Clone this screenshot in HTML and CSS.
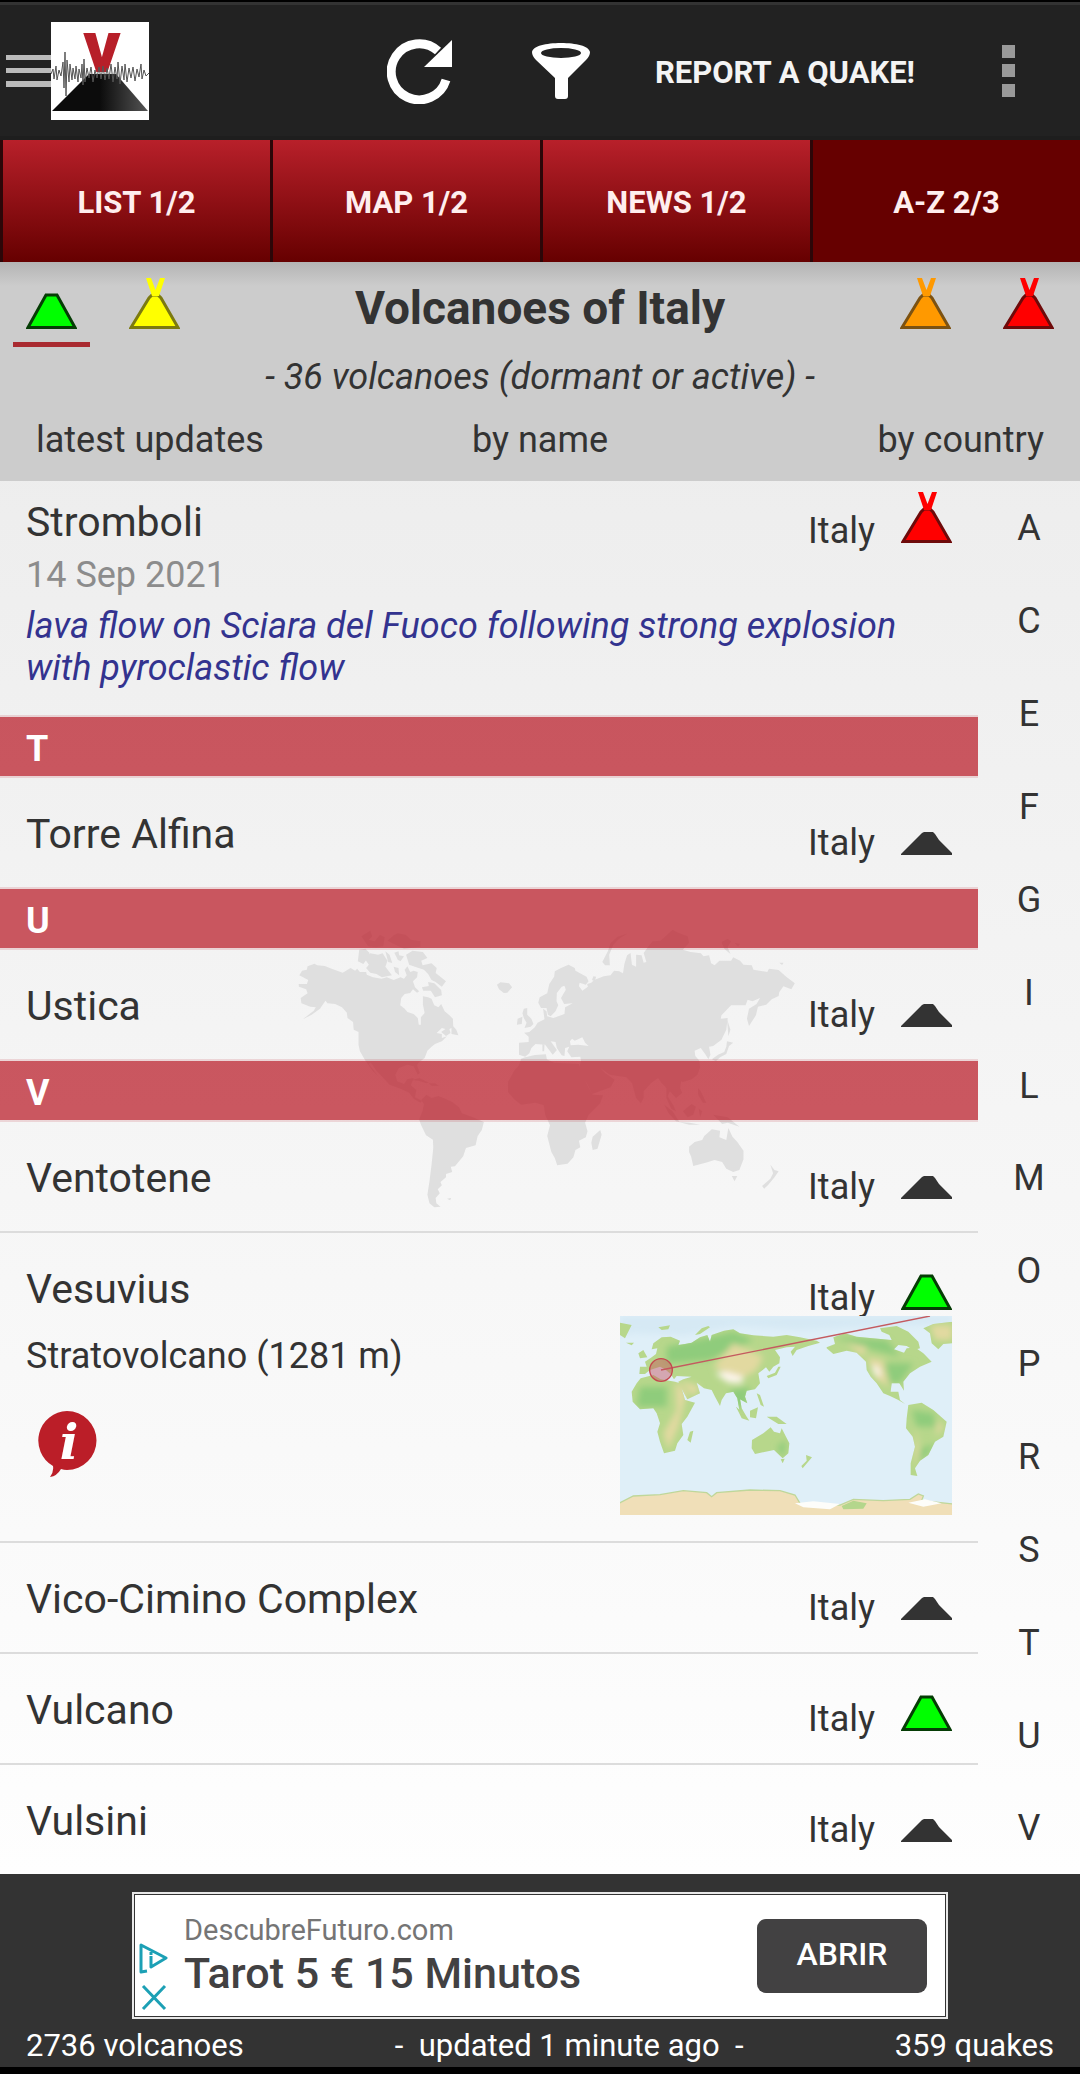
FILE: index.html
```html
<!DOCTYPE html>
<html lang="en">
<head>
	<meta charset="UTF-8">
	<meta name="viewport" content="width=device-width, initial-scale=1">
	<title>Volcanoes of Italy</title>
	<link rel="stylesheet" href="styles.css">
</head>
<body>
	<svg class="defs" aria-hidden="true">
		<symbol id="cone" viewBox="0 0 51 51">
			<path d="M2 49.500 L20 17 H31 L49 49.500 Z" stroke-width="3"/>
		</symbol>
		<symbol id="erupting" viewBox="0 0 51 51">
			<path d="M2 49.500 L20 20 L23 17 H29 L32 20 L49 49.500 Z" stroke-width="3"/>
			<path class="lava" d="M17 0 H22 L26.500 12 L31 0 H36 L30 18 H23 Z"/>
		</symbol>
		<symbol id="dormant" viewBox="0 0 51 51">
			<path d="M0 51 V50 L21 29 L23 28 H32 L34 30 L38 36 L51 49 V51 Z"/>
		</symbol>
	</svg>

	<header class="topbar">
		<button class="menu-btn" aria-label="Menu">
			<svg class="bars" viewBox="0 0 45 32"><path fill="#bbb" d="M0 0h45v5H0zM0 13h45v5H0zM0 26h45v6H0z"/></svg>
			<svg class="logo" viewBox="0 0 98 98">
				<defs>
					<linearGradient id="hill" x1="0" x2="1" y1="0" y2="0">
						<stop offset=".5" stop-color="#0c0c0c"/>
						<stop offset="1" stop-color="#555"/>
					</linearGradient>
				</defs>
				<rect width="98" height="98" fill="#fff"/>
				<text x="51" y="49" text-anchor="middle" font-family="Roboto, sans-serif" font-weight="900" font-size="52" stroke="#b71f29" stroke-width="2" fill="#b71f29">V</text>
				<path fill="url(#hill)" d="M1 89 L38 52 H65 L97 89 Z"/>
				<path fill="none" stroke="#555" d="M0 52 L2 47 L3 57 L5 44 L6 58 L8 48 L10 54 L12 40 L13 66 L14 30 L15 74 L16 38 L18 60 L19 42 L21 58 L22 46 L24 57 L25 44 L27 60 L28 47 L30 56 L31 42 L32 63 L33 37 L34 60 L36 46 L38 56 L40 45 L42 60 L44 48 L46 56 L48 45 L50 57 L52 44 L54 58 L56 46 L58 57 L60 42 L62 60 L64 45 L66 57 L67 40 L69 62 L71 44 L73 58 L74 42 L76 60 L78 46 L80 56 L82 45 L84 59 L86 47 L88 55 L90 42 L91 57 L93 48 L95 54 L98 51"/>
			</svg>
		</button>
		<div class="actions">
			<button class="refresh" aria-label="Refresh">
				<svg viewBox="0 0 65 65">
					<path fill="none" stroke="#fff" stroke-width="9" d="M59 41 A28 28 0 1 1 51 12"/>
					<path fill="#fff" d="M65 1 V28 H37 Z"/>
				</svg>
			</button>
			<button class="filter" aria-label="Filter">
				<svg viewBox="0 0 58 56">
					<path fill="#fff" d="M0 9 C1 3 14 0 29 0 S57 3 58 9 Q58 13 54 17 L36 35 V53 Q36 56 33 56 H26 Q23 56 23 53 V35 L4 17 Q0 13 0 9Z"/>
					<ellipse cx="29" cy="10" rx="20" ry="5" fill="#222"/>
				</svg>
			</button>
			<button class="report">REPORT A QUAKE!</button>
			<button class="more" aria-label="More options">
				<svg viewBox="0 0 13 52"><path fill="#999" d="M0 0h13v13H0zM0 19h13v13H0zM0 39h13v13H0z"/></svg>
			</button>
		</div>
	</header>

	<nav class="tabs">
		<a href="#">LIST 1/2</a>
		<a href="#">MAP 1/2</a>
		<a href="#">NEWS 1/2</a>
		<a href="#" class="active">A-Z 2/3</a>
	</nav>

	<div class="content">
		<!-- world map watermark -->
		<svg class="world" viewBox="13 80 1484 840" preserveAspectRatio="none" aria-hidden="true">
			<!-- americas -->
			<path d="M56 222 L64 208 L78 205 L80 195 L100 187 L108 192 L130 194 L150 202 L182 214 L205 200 L218 208 L224 202 L232 212 L250 212 L252 220 L270 228 L295 232 L310 228 L330 236 L350 228 L360 232 L368 222 L362 205 L370 195 L378 212 L388 208 L400 212 L398 228 L386 240 L392 258 L404 270 L398 274 L386 264 L378 275 L362 278 L352 290 L349 312 L362 322 L370 332 L388 338 L400 350 L403 370 L409 370 L409 348 L420 335 L415 310 L415 285 L430 288 L440 292 L448 312 L460 318 L468 308 L478 330 L492 342 L502 352 L503 375 L512 385 L518 402 L498 398 L498 380 L488 385 L470 380 L455 395 L470 398 L470 410 L485 405 L470 420 L450 428 L440 436 L428 448 L420 470 L402 484 L398 492 L406 515 L400 520 L388 495 L370 490 L345 500 L335 520 L340 540 L360 548 L370 533 L388 530 L380 552 L396 566 L392 588 L412 598 L408 604 L388 592 L375 574 L350 562 L318 550 L300 530 L280 508 L264 484 L258 488 L285 525 L270 510 L248 478 L232 450 L228 430 L228 392 L214 385 L212 362 L196 350 L194 334 L180 318 L160 308 L138 306 L132 298 L116 322 L92 340 L66 354 L98 328 L104 318 L88 316 L62 306 L60 290 L80 276 L76 264 L55 256 L54 248 L78 248 L82 236 Z"/>
			<path d="M410 596 L425 580 L440 590 L460 584 L480 592 L500 602 L520 618 L528 636 L560 648 L592 662 L586 686 L574 704 L568 732 L540 740 L532 765 L508 795 L496 796 L500 812 L482 818 L482 828 L466 842 L470 852 L458 864 L464 876 L452 890 L454 906 L466 916 L448 918 L434 906 L428 880 L434 840 L440 790 L445 740 L444 715 L424 702 L410 672 L404 655 L414 628 L418 608 Z"/>
			<path d="M230 145 L248 142 L260 155 L256 168 L242 188 L226 180 Z M246 172 L262 156 L285 160 L298 156 L312 178 L306 196 L325 222 L296 228 L280 218 L262 214 L250 200 L258 190 Z M236 105 L262 88 L268 105 L258 115 L275 120 L290 100 L304 108 L300 135 L278 138 L256 135 Z M312 118 L330 102 L342 96 L365 100 L380 115 L408 120 L408 136 L360 142 L335 130 Z M306 150 L318 160 L326 185 L314 182 Z M332 154 L344 150 L346 162 L360 165 L350 180 L342 175 Z M330 196 L344 200 L346 222 L334 212 Z M366 160 L385 148 L415 152 L428 170 L410 178 L414 192 L440 186 L455 200 L452 215 L482 240 L470 256 L452 242 L440 236 L430 218 L418 205 L396 198 L375 190 Z M412 258 L432 254 L430 242 L448 246 L468 266 L470 282 L450 288 L438 268 L416 268 Z M468 392 L490 376 L495 395 L482 404 Z"/>
			<path d="M382 536 L405 530 L432 544 L425 546 L402 538 Z M432 546 L450 546 L462 554 L440 553 Z M485 892 L497 890 L494 897 Z"/>
			<!-- iceland, british isles -->
			<path d="M630 250 L640 243 L665 246 L674 258 L660 274 L650 275 L636 264 Z M690 352 L704 346 L702 368 L688 370 Z M708 322 L718 320 L718 340 L730 352 L736 368 L728 376 L710 380 L716 364 L708 350 L704 336 Z"/>
			<!-- eurasia -->
			<path d="M694 424 L722 422 L722 406 L709 394 L724 392 L740 378 L748 364 L768 354 L764 322 L774 330 L776 345 L794 350 L826 338 L828 318 L850 306 L825 308 L816 290 L830 265 L826 253 L818 256 L804 275 L803 300 L808 312 L800 330 L786 345 L778 340 L774 320 L758 320 L750 304 L754 288 L776 276 L782 248 L796 226 L798 210 L816 200 L838 190 L856 200 L858 208 L890 226 L896 240 L888 250 L870 244 L868 254 L878 268 L894 256 L892 248 L904 244 L912 236 L940 225 L960 222 L970 208 L985 210 L996 216 L1000 188 L1008 162 L1018 155 L1022 190 L1034 196 L1034 160 L1050 162 L1056 184 L1064 182 L1056 155 L1072 132 L1082 120 L1105 118 L1140 85 L1158 95 L1184 105 L1188 124 L1170 145 L1192 152 L1222 156 L1230 165 L1246 162 L1252 186 L1262 192 L1276 178 L1310 178 L1316 168 L1336 178 L1346 190 L1370 192 L1375 205 L1415 212 L1420 202 L1448 206 L1470 226 L1495 246 L1485 264 L1462 255 L1450 272 L1448 284 L1428 294 L1412 310 L1388 316 L1382 342 L1362 374 L1356 352 L1362 322 L1384 308 L1394 290 L1372 300 L1358 295 L1352 312 L1310 312 L1282 342 L1280 352 L1300 350 L1296 385 L1282 415 L1258 434 L1246 436 L1250 460 L1244 474 L1236 460 L1222 440 L1204 448 L1206 464 L1218 478 L1220 498 L1212 520 L1196 534 L1170 542 L1165 540 L1162 560 L1168 575 L1150 590 L1132 570 L1126 585 L1142 612 L1150 630 L1136 622 L1122 590 L1122 560 L1108 545 L1098 530 L1078 545 L1056 570 L1056 590 L1048 606 L1034 590 L1022 545 L1006 528 L980 524 L958 520 L930 500 L944 515 L972 535 L960 558 L906 578 L892 548 L866 508 L874 480 L872 466 L846 468 L834 450 L840 436 L828 440 L826 464 L818 462 L804 440 L800 422 L786 420 L804 446 L792 460 L770 430 L742 428 L730 440 L724 456 L712 466 L694 460 Z M844 432 L866 430 L896 434 L886 424 L878 408 L856 418 L848 412 L842 420 Z" fill-rule="evenodd"/>
			<path d="M936 182 L952 150 L960 125 L980 106 L1010 96 L985 112 L968 130 L956 160 L958 192 L944 192 Z M1282 122 L1300 112 L1310 120 L1300 138 L1308 158 L1290 142 Z M1320 124 L1336 128 L1330 136 Z M1450 184 L1462 184 L1458 191 Z M1298 352 L1308 385 L1302 405 Z M1298 420 L1316 424 L1304 434 L1296 458 L1278 468 L1266 480 L1254 474 L1272 460 L1290 452 L1296 436 Z M762 428 L768 430 L767 450 L762 450 Z M910 225 L918 226 L914 240 L906 236 Z"/>
			<!-- africa -->
			<path d="M700 472 L712 468 L740 461 L772 459 L775 474 L796 484 L830 486 L868 488 L878 520 L892 550 L908 580 L938 582 L930 606 L896 640 L886 664 L893 690 L888 708 L868 718 L872 738 L858 746 L852 768 L835 787 L805 792 L798 770 L788 752 L776 704 L784 672 L770 640 L766 612 L742 604 L700 610 L680 594 L662 572 L662 542 L680 508 L694 492 Z M930 686 L934 700 L922 742 L908 746 L904 724 L908 706 Z"/>
			<!-- oceania -->
			<path d="M1188 736 L1204 722 L1226 716 L1232 704 L1254 684 L1278 688 L1276 708 L1296 716 L1302 680 L1314 706 L1328 722 L1346 748 L1346 774 L1334 806 L1316 812 L1296 802 L1284 782 L1262 776 L1236 784 L1200 794 L1194 766 L1188 752 Z M1312 824 L1328 824 L1320 840 Z M1424 790 L1436 806 L1448 810 L1436 828 L1418 850 L1406 862 L1400 854 L1424 832 L1432 816 Z"/>
			<path d="M1116 610 L1140 630 L1160 662 L1150 660 L1128 635 Z M1158 662 L1190 664 L1220 670 L1188 670 Z M1170 630 L1195 608 L1208 616 L1200 640 L1184 648 Z M1214 560 L1222 570 L1238 605 L1228 604 L1214 580 Z M1216 622 L1226 630 L1220 648 Z M1258 640 L1300 648 L1334 676 L1300 664 L1284 668 Z"/>
		</svg>

		<section class="heading">
			<div class="levels">
				<button class="level selected" aria-label="Normal"><svg class="icon green"><use href="#cone"/></svg></button>
				<button class="level" aria-label="Unrest"><svg class="icon yellow"><use href="#erupting"/></svg></button>
				<h1>Volcanoes of Italy</h1>
				<button class="level" aria-label="Minor activity"><svg class="icon orange"><use href="#erupting"/></svg></button>
				<button class="level" aria-label="Erupting"><svg class="icon red"><use href="#erupting"/></svg></button>
			</div>
			<p class="count">- 36 volcanoes (dormant or active) -</p>
			<div class="sort">
				<button>latest updates</button>
				<button>by name</button>
				<button>by country</button>
			</div>
		</section>

		<main class="main">
			<ul class="list">
				<li class="row first">
					<div class="head">
						<span class="name">Stromboli</span>
						<div class="where"><span>Italy</span><svg class="icon red"><use href="#erupting"/></svg></div>
					</div>
					<p class="date">14 Sep 2021</p>
					<p class="news">lava flow on Sciara del Fuoco following strong explosion with pyroclastic flow</p>
				</li>
				<li class="letter">T</li>
				<li class="row">
					<div class="head">
						<span class="name">Torre Alfina</span>
						<div class="where"><span>Italy</span><svg class="icon gray"><use href="#dormant"/></svg></div>
					</div>
				</li>
				<li class="letter">U</li>
				<li class="row">
					<div class="head">
						<span class="name">Ustica</span>
						<div class="where"><span>Italy</span><svg class="icon gray"><use href="#dormant"/></svg></div>
					</div>
				</li>
				<li class="letter">V</li>
				<li class="row">
					<div class="head">
						<span class="name">Ventotene</span>
						<div class="where"><span>Italy</span><svg class="icon gray"><use href="#dormant"/></svg></div>
					</div>
				</li>
				<li class="row">
					<div class="head">
						<span class="name">Vesuvius</span>
						<div class="where"><span>Italy</span><svg class="icon green"><use href="#cone"/></svg></div>
					</div>
					<div class="details">
						<div>
							<p class="type">Stratovolcano (1281 m)</p>
							<button class="info" aria-label="More about Vesuvius">
								<svg viewBox="0 0 59 66">
									<path fill="#bb1e28" d="M29 0 A29.500 29.500 0 0 1 29 59 Q26 59 23 58 Q19 65 12 66 Q16 61 15 55 A29.500 29.500 0 0 1 29 0Z"/>
									<text x="31" y="48" text-anchor="middle" font-family="'DejaVu Serif', serif" font-weight="bold" font-style="italic" font-size="49" fill="#fff">i</text>
								</svg>
							</button>
						</div>
						<svg class="minimap" viewBox="60 288 996 597" role="img" aria-label="Location of Vesuvius">
							<defs>
								<filter id="soft"><feGaussianBlur stdDeviation="9"/></filter>
								<clipPath id="land">
									<path d="M118 462 L120 440 L140 440 L135 425 L155 412 L168 402 L172 385 L155 388 L160 370 L185 352 L212 350 L240 362 L235 375 L255 372 L275 368 L300 352 L322 345 L330 365 L335 345 L372 332 L400 328 L420 340 L460 346 L520 350 L560 345 L600 352 L650 362 L660 368 L625 378 L590 390 L578 408 L572 395 L585 380 L560 382 L525 390 L540 412 L538 430 L520 440 L508 455 L498 442 L475 460 L480 490 L465 508 L440 512 L435 530 L442 550 L420 538 L425 565 L440 590 L418 570 L412 535 L400 515 L378 520 L365 540 L360 558 L345 530 L335 510 L312 505 L290 488 L300 520 L262 538 L242 500 L235 485 L250 478 L275 470 L230 468 L222 478 L212 462 L195 448 L180 440 L150 450 L135 462 Z"/>
									<path d="M122 475 L160 465 L182 478 L225 485 L240 490 L255 540 L285 548 L262 590 L245 612 L250 645 L232 670 L225 692 L192 700 L180 665 L172 635 L180 610 L170 580 L160 565 L120 568 L98 545 L95 515 L110 490 Z M270 635 L280 632 L272 668 L262 660 Z"/>
									<path d="M456 660 L490 640 L512 622 L522 635 L540 640 L545 625 L568 670 L565 700 L548 715 L522 690 L465 702 L455 685 Z M542 718 L554 716 L548 730 Z M618 705 L636 712 L608 745 L604 738 L620 722 Z M408 560 L440 590 L448 602 L425 595 Z M450 572 L474 562 L468 595 L450 592 Z M500 590 L530 590 L560 612 L535 612 Z M470 520 L480 525 L492 560 L482 555 Z M535 440 L542 440 L530 465 L505 475 L500 468 L525 458 Z"/>
									<path d="M680 382 L705 372 L700 352 L735 340 L770 350 L850 358 L875 360 L868 345 L845 335 L840 325 L890 318 L925 335 L955 365 L960 385 L940 390 L920 378 L895 375 L882 388 L912 398 L920 385 L945 382 L970 400 L995 425 L960 440 L930 460 L910 485 L912 512 L898 490 L875 490 L872 515 L895 515 L900 540 L915 552 L895 540 L870 528 L850 520 L830 490 L812 470 L800 450 L798 425 L770 398 L740 392 L700 402 L680 385 Z"/>
									<path d="M925 555 L965 548 L1000 570 L1040 605 L1030 650 L1005 665 L985 705 L960 722 L945 745 L952 768 L932 765 L932 730 L945 680 L938 650 L918 625 L920 595 Z"/>
									<path d="M970 325 L1000 312 L1056 305 L1056 370 L1030 372 L1015 388 L995 370 L990 340 Z M60 308 L95 315 L85 335 L75 355 L60 345 Z M78 368 L102 368 L95 376 Z M115 400 L130 390 L142 412 L120 415 Z M175 322 L210 316 L205 328 L185 330 Z M285 345 L305 325 L325 318 L330 322 L300 342 Z"/>
								</clipPath>
							</defs>
							<rect x="60" y="288" width="996" height="597" fill="#dfeff8"/>
							<path fill="#d6e9f4" d="M60 288 H1056 V312 L900 318 L600 330 L420 318 L250 345 L100 340 L60 350 Z" filter="url(#soft)"/>
							<g clip-path="url(#land)">
								<rect x="60" y="288" width="996" height="597" fill="#b7d78b"/>
								<g filter="url(#soft)">
									<path fill="#8fcc7c" d="M200 380 L400 335 L460 360 L330 420 L200 430 Z M120 500 H200 V560 H110 Z M390 510 L450 500 L440 560 L400 560 Z M530 680 L560 660 L550 715 Z M935 570 L1000 580 L1010 620 L950 620 Z M850 430 H940 L900 490 H860 Z M700 350 L860 360 L900 410 L820 390 Z M950 690 L1010 670 L960 730 Z"/>
									<path fill="#e2d9a0" d="M340 440 L400 370 L490 410 L470 450 L420 480 Z M225 480 L260 520 L235 620 L205 690 L190 640 L230 570 Z M240 480 L300 500 L280 530 Z M800 410 L850 420 L870 500 L830 480 Z M740 370 L800 380 L790 410 Z M945 620 L960 700 L945 740 Z M990 315 H1056 V360 H1005 Z M1010 600 L1030 620 L1010 650 Z"/>
									<path fill="#fdf5ec" d="M345 460 L380 455 L430 470 L425 490 L385 488 Z M815 435 L835 440 L845 470 L825 465 Z"/>
								</g>
							</g>
							<path fill="#f0dfb8" stroke="#bfd79a" stroke-width="4" d="M56 850 L100 828 L180 824 L250 812 L320 818 L335 830 L350 818 L450 810 L540 812 L585 825 L600 850 L720 855 L760 838 L850 842 L930 838 L955 822 L970 828 L965 842 L1060 852 V890 H56 Z"/>
							<path fill="#fdfdfa" d="M585 850 L640 844 L720 852 L690 868 L610 862 Z M925 848 L975 838 L1025 850 L970 860 Z"/>
							<path fill="#b4d68c" d="M725 858 L760 842 L800 850 L790 866 L730 868 Z"/>
							<path fill="none" stroke="#c45a5f" stroke-width="4" d="M183 450 L990 288"/>
							<circle cx="183" cy="450" r="34" fill="#c8505a" fill-opacity=".45" stroke="#c4484f" stroke-width="4"/>
						</svg>
					</div>
				</li>
				<li class="row">
					<div class="head">
						<span class="name">Vico-Cimino Complex</span>
						<div class="where"><span>Italy</span><svg class="icon gray"><use href="#dormant"/></svg></div>
					</div>
				</li>
				<li class="row">
					<div class="head">
						<span class="name">Vulcano</span>
						<div class="where"><span>Italy</span><svg class="icon green"><use href="#cone"/></svg></div>
					</div>
				</li>
				<li class="row">
					<div class="head">
						<span class="name">Vulsini</span>
						<div class="where"><span>Italy</span><svg class="icon gray"><use href="#dormant"/></svg></div>
					</div>
				</li>
			</ul>
			<nav class="index">
				<a href="#">A</a>
				<a href="#">C</a>
				<a href="#">E</a>
				<a href="#">F</a>
				<a href="#">G</a>
				<a href="#">I</a>
				<a href="#">L</a>
				<a href="#">M</a>
				<a href="#">O</a>
				<a href="#">P</a>
				<a href="#">R</a>
				<a href="#">S</a>
				<a href="#">T</a>
				<a href="#">U</a>
				<a href="#">V</a>
			</nav>
		</main>
	</div>

	<footer class="footer">
		<div class="ad">
			<div class="ad-inner">
				<div class="ad-icons">
					<button aria-label="AdChoices">
						<svg viewBox="0 0 29 31"><path fill="none" stroke="#1ca0b5" stroke-width="3" stroke-linejoin="round" d="M8 28 L2 29 V2 L27 15 L12 24 V13 M12 9 V12"/></svg>
					</button>
					<button aria-label="Close ad">
						<svg viewBox="0 0 29 31"><path fill="none" stroke="#1ca0b5" stroke-width="3" d="M4 4 L26 27 M26 4 L4 27"/></svg>
					</button>
				</div>
				<div class="ad-text">
					<p class="ad-site">DescubreFuturo.com</p>
					<p class="ad-title">Tarot 5 € 15 Minutos</p>
				</div>
				<button class="ad-open">ABRIR</button>
			</div>
		</div>
		<div class="status">
			<span>2736 volcanoes</span>
			<span>-&nbsp; updated 1 minute ago &nbsp;-</span>
			<span>359 quakes</span>
		</div>
	</footer>
</body>
</html>
```

FILE: styles.css
```css
*{
	box-sizing: border-box;
}
html,body{
	margin: 0;
}
body{
	min-height: 100vh;
	display: flex;
	flex-direction: column;
	border-top: 2px solid #000;
	border-bottom: 7px solid #000;
	background: #333;
	color: #333;
	font-family: Roboto, sans-serif;
	font-size: 36px;
}
button{
	padding: 0;
	border: none;
	background: none;
	color: inherit;
	font: inherit;
	cursor: pointer;
}
a{
	color: inherit;
	text-decoration: none;
}
p,h1,ul{
	margin: 0;
	padding: 0;
}
svg{
	display: block;
}
.defs{
	position: absolute;
	width: 0;
	height: 0;
}

/* top bar */
.topbar{
	display: flex;
	align-items: center;
	justify-content: space-between;
	height: 138px;
	padding: 0 65px 0 6px;
	background: #222;
	box-shadow: inset 0 3px #333, inset 0 -4px #1e1e1e;
}
.menu-btn,
.actions{
	display: flex;
	align-items: center;
}
.bars{
	width: 45px;
	height: 32px;
}
.logo{
	width: 98px;
	height: 98px;
}
.refresh svg{
	width: 65px;
	height: 65px;
}
.filter{
	margin: 0 65px 0 80px;
}
.filter svg{
	width: 58px;
	height: 56px;
}
.report{
	padding-top: 2px;
	color: #f4f4f4;
	font-size: 31px;
	font-weight: bold;
}
.more{
	margin-left: 87px;
}
.more svg{
	width: 13px;
	height: 52px;
}

/* tabs */
.tabs{
	display: grid;
	grid-template-columns: repeat(4, 1fr);
	gap: 3px;
	padding-left: 3px;
	background: #2c0608;
}
.tabs a{
	padding-top: 3px;
	background: linear-gradient(#b8202a, #600);
	color: #fee;
	font-size: 31px;
	font-weight: bold;
	line-height: 119px;
	text-align: center;
}
.tabs a.active{
	background: #600;
}

.content{
	position: relative;
	z-index: 0;
	flex: 1;
	display: flex;
	flex-direction: column;
	background: linear-gradient(#ebebeb, #fefefe);
}
.world{
	position: absolute;
	z-index: -1;
	top: 50%;
	left: 50%;
	width: 511px;
	height: 280px;
	transform: translate(-50%, -50%);
	fill: #dfdfdf;
}

/* heading */
.heading{
	padding-bottom: 8px;
	background: linear-gradient(#b4b4b4, #ccc 24px);
}
.levels{
	display: flex;
	gap: 26px;
	padding: 0 13px;
}
.levels h1{
	flex: 1;
	font-size: 46px;
	line-height: 92px;
	height: 85px;
	text-align: center;
}
.level{
	width: 77px;
	padding: 16px 13px 13px;
	border-bottom: 5px solid transparent;
}
.level.selected{
	border-color: #a92a30;
}
.icon{
	flex: none;
	width: 51px;
	height: 51px;
}
.green{
	fill: #0f0;
	stroke: #053c05;
}
.yellow{
	fill: #ff0;
	stroke: #7c7a10;
}
.orange{
	fill: #f90;
	stroke: #7c5212;
}
.red{
	fill: #f00;
	stroke: #6e0a0a;
}
.gray{
	fill: #333;
}
.lava{
	stroke: none;
}
.count{
	font-style: italic;
	line-height: 60px;
	text-align: center;
}
.sort{
	display: grid;
	grid-template-columns: repeat(3, 1fr);
	padding: 0 36px;
}
.sort button{
	line-height: 66px;
}
.sort button:first-child{
	text-align: left;
}
.sort button:last-child{
	text-align: right;
}

/* list */
.main{
	flex: 1;
	display: flex;
}
.list{
	flex: 1;
	list-style: none;
}
.row{
	padding: 26px;
}
.row + .row{
	border-top: 2px solid #dcdcdc;
}
.row.first{
	padding-top: 11px;
}
.head{
	display: flex;
	align-items: flex-start;
	justify-content: space-between;
	height: 57px;
}
.name{
	font-size: 41px;
	line-height: 61px;
}
.where{
	display: flex;
	align-items: baseline;
	gap: 26px;
	line-height: 37px;
}
.date{
	color: #8c8c8c;
	line-height: 52px;
}
.news{
	margin-top: 4px;
	color: #33338f;
	font-style: italic;
	line-height: 42px;
}
.letter{
	padding: 5px 26px 0;
	border: solid rgba(187,34,46,0.15);
	border-width: 2px 0;
	background: rgba(187,34,46,0.75);
	background-clip: padding-box;
	color: #fff;
	font-size: 36px;
	font-weight: bold;
	line-height: 54px;
}
.details{
	display: flex;
	justify-content: space-between;
}
.type{
	padding-top: 18px;
	line-height: 44px;
}
.info{
	margin: 33px 12px 0;
}
.info svg{
	width: 59px;
	height: 66px;
}
.minimap{
	width: 332px;
	height: 199px;
}
.index{
	width: 102px;
	display: flex;
	flex-direction: column;
}
.index a{
	flex: 1;
	display: flex;
	align-items: center;
	justify-content: center;
	padding-top: 2px;
}

/* footer */
.footer{
	padding-top: 18px;
	color: #fff;
}
.ad{
	max-width: 816px;
	margin: 0 auto;
	padding: 1px;
	border: 2px solid #e8e8e8;
}
.ad-inner{
	display: flex;
	align-items: center;
	height: 121px;
	padding: 0 18px 0 4px;
	background: #fff;
}
.ad-icons{
	display: flex;
	flex-direction: column;
	gap: 8px;
	padding-top: 45px;
}
.ad-icons svg{
	width: 29px;
	height: 31px;
}
.ad-text{
	flex: 1;
	padding-left: 16px;
}
.ad-site{
	color: #757575;
	font-size: 29px;
	line-height: 34px;
}
.ad-title{
	color: #424142;
	font-size: 43px;
	font-weight: 500;
	line-height: 52px;
}
.ad-open{
	width: 170px;
	height: 74px;
	padding-bottom: 4px;
	border-radius: 9px;
	background: #424142;
	color: #fff;
	font-size: 32px;
	font-weight: 500;
}
.status{
	display: flex;
	justify-content: space-between;
	padding: 5px 26px 0;
	font-size: 31px;
	line-height: 43px;
}
```
